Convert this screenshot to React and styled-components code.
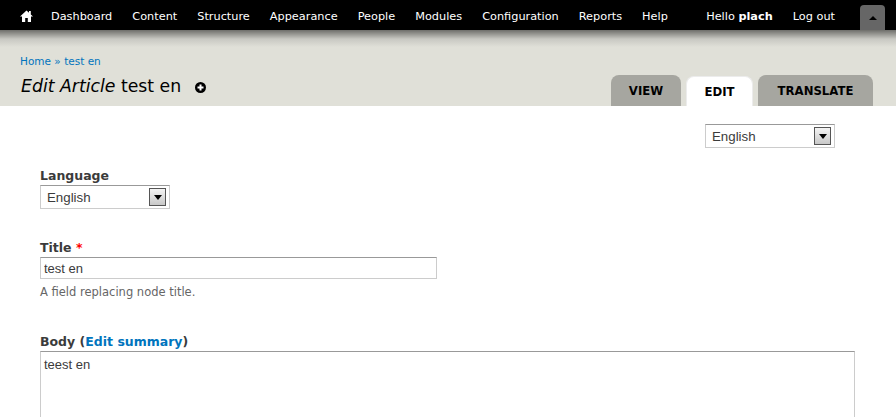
import React from 'react';
import styled, { createGlobalStyle } from 'styled-components';

const GlobalStyle = createGlobalStyle`
  html, body {
    margin: 0;
    padding: 0;
    height: 417px;
    overflow: hidden;
    background: #ffffff;
    font-family: "DejaVu Sans", Verdana, sans-serif;
  }
`;

const menuItems = ['Dashboard', 'Content', 'Structure', 'Appearance', 'People', 'Modules', 'Configuration', 'Reports', 'Help'];

function Select() {
  return (
    <SelectBox>
      <span>English</span>
      <SelectArrow>
        <svg width="8" height="5" viewBox="0 0 8 5">
          <path d="M0 0h8L4 5z" fill="#000" />
        </svg>
      </SelectArrow>
    </SelectBox>
  );
}

export default function App() {
  return (
    <Page>
      <GlobalStyle />
      <Toolbar>
        <HomeLink>
          <svg width="13" height="12" viewBox="0 0 13 12">
            <path d="M6.5 0.5L0 6.5h2V12h3.2V8h2.6v4H11V6.5h2L10.8 4.4V1H9v1.7z" fill="#fff" />
          </svg>
        </HomeLink>
        <Menu>
          {menuItems.map((item) => (
            <MenuLink key={item}>{item}</MenuLink>
          ))}
        </Menu>
        <UserMenu>
          <UserName>
            Hello <strong>plach</strong>
          </UserName>
          <MenuLink>Log out</MenuLink>
        </UserMenu>
        <ToggleButton>
          <svg width="8" height="4" viewBox="0 0 8 4">
            <path d="M0 4h8L4 0z" fill="#000" />
          </svg>
        </ToggleButton>
      </Toolbar>
      <Header>
        <HeaderLeft>
          <Breadcrumb>
            <LinkText>Home</LinkText> » <LinkText>test en</LinkText>
          </Breadcrumb>
          <PageTitle>
            <span>
              <em>Edit Article</em> test en
            </span>
            <AddIcon>
              <svg width="11" height="11" viewBox="0 0 11 11">
                <circle cx="5.5" cy="5.5" r="5.5" fill="#000" />
                <path d="M4.5 2.5h2v2h2v2h-2v2h-2v-2h-2v-2h2z" fill="#fff" />
              </svg>
            </AddIcon>
          </PageTitle>
        </HeaderLeft>
        <Tabs>
          <Tab $width={70}>VIEW</Tab>
          <Tab $width={67} $active>EDIT</Tab>
          <Tab $width={115}>TRANSLATE</Tab>
        </Tabs>
      </Header>
      <Content>
        <TopSwitcher>
          <Select />
        </TopSwitcher>
        <LanguageField>
          <Label>Language</Label>
          <Select />
        </LanguageField>
        <TitleField>
          <Label>
            Title <Required>*</Required>
          </Label>
          <TextInput defaultValue="test en" />
          <Description>A field replacing node title.</Description>
        </TitleField>
        <BodyField>
          <Label>
            Body (<BoldLink>Edit summary</BoldLink>)
          </Label>
          <BodyArea defaultValue="teest en" />
        </BodyField>
      </Content>
    </Page>
  );
}

const Page = styled.div`
  width: 896px;
  height: 417px;
  overflow: hidden;
`;

const Toolbar = styled.div`
  display: flex;
  align-items: flex-start;
  height: 30px;
  background: #000000;
  color: #ffffff;
  font-size: 11.3px;
`;

const HomeLink = styled.a`
  display: flex;
  margin: 10px 0 0 20px;
  width: 13px;
`;

const Menu = styled.nav`
  display: flex;
  gap: 20px;
  margin: 10px 0 0 18px;
  line-height: 13px;
`;

const MenuLink = styled.a`
  color: #ffffff;
  white-space: nowrap;
`;

const UserMenu = styled.div`
  display: flex;
  gap: 20px;
  margin: 10px 0 0 auto;
  line-height: 13px;
`;

const UserName = styled.span`
  white-space: nowrap;
  strong {
    font-weight: 700;
  }
`;

const ToggleButton = styled.button`
  display: flex;
  align-items: center;
  justify-content: center;
  width: 25px;
  height: 25px;
  margin: 5px 11px 0 25px;
  padding: 0;
  border: 0;
  border-radius: 4px 4px 0 0;
  background: #666666;
`;

const Header = styled.header`
  display: flex;
  justify-content: space-between;
  align-items: flex-end;
  height: 76px;
  padding: 0 23px 0 20px;
  background: linear-gradient(#6e6e6a 0, #c8c8c2 9px, #e0e0d8 17px, #e0e0d8 100%);
`;

const HeaderLeft = styled.div`
  display: flex;
  flex-direction: column;
  align-self: flex-start;
  padding-top: 25px;
`;

const Breadcrumb = styled.div`
  font-size: 10.5px;
  line-height: 13px;
  color: #0074bd;
`;

const LinkText = styled.a`
  color: #0074bd;
`;

const PageTitle = styled.h1`
  display: flex;
  align-items: center;
  margin: 7px 0 0 1px;
  font-size: 17.3px;
  line-height: 23px;
  font-weight: 400;
  color: #000000;
  em {
    font-style: italic;
  }
`;

const AddIcon = styled.span`
  display: flex;
  margin: 1px 0 0 14px;
`;

const Tabs = styled.div`
  display: flex;
  align-items: flex-end;
  gap: 5px;
`;

const Tab = styled.a`
  display: flex;
  align-items: center;
  justify-content: center;
  box-sizing: border-box;
  width: ${(p) => p.$width}px;
  height: ${(p) => (p.$active ? '30px' : '31px')};
  border-radius: 8px 8px 0 0;
  background: ${(p) => (p.$active ? '#ffffff' : '#a6a6a0')};
  color: #000000;
  font-size: 11.7px;
  font-weight: 700;
  ${(p) => p.$active && 'border: 1px solid #ececec; border-bottom: 0;'}
`;

const Content = styled.main`
  display: flex;
  flex-direction: column;
  padding: 18px 41px 0 40px;
  background: #ffffff;
`;

const TopSwitcher = styled.div`
  display: flex;
  justify-content: flex-end;
  padding-right: 20px;
`;

const SelectBox = styled.div`
  display: flex;
  align-items: center;
  justify-content: space-between;
  box-sizing: border-box;
  width: 130px;
  height: 24px;
  padding: 0 3px 0 6px;
  border: 1px solid #cccccc;
  border-top-color: #999999;
  font-family: "Liberation Sans", Arial, sans-serif;
  font-size: 13.3px;
  color: #3b3b3b;
`;

const SelectArrow = styled.span`
  display: flex;
  align-items: center;
  justify-content: center;
  box-sizing: border-box;
  width: 17px;
  height: 18px;
  border: 1px solid #555555;
  background: linear-gradient(#f4f4f4, #c8c8c8);
`;

const LanguageField = styled.div`
  margin-top: 20px;
`;

const Label = styled.label`
  display: block;
  margin-bottom: 1px;
  font-size: 12.5px;
  line-height: 16px;
  font-weight: 700;
  color: #3b3b3b;
`;

const Required = styled.span`
  color: #ff0000;
`;

const TitleField = styled.div`
  margin-top: 31px;
`;

const TextInput = styled.input`
  display: block;
  box-sizing: border-box;
  width: 397px;
  height: 22px;
  margin: 0;
  padding: 0 3px;
  border: 1px solid #cccccc;
  border-top-color: #999999;
  outline: 0;
  font-family: "Liberation Sans", Arial, sans-serif;
  font-size: 13px;
  color: #3b3b3b;
`;

const Description = styled.div`
  margin-top: 6px;
  font-size: 11.5px;
  line-height: 14px;
  color: #666666;
`;

const BodyField = styled.div`
  margin-top: 35px;
`;

const BoldLink = styled.a`
  color: #0074bd;
`;

const BodyArea = styled.textarea`
  display: block;
  box-sizing: border-box;
  width: 815px;
  height: 200px;
  margin: 0;
  padding: 5px 3px;
  border: 1px solid #cccccc;
  border-top-color: #999999;
  outline: 0;
  resize: none;
  font-family: "Liberation Sans", Arial, sans-serif;
  font-size: 13px;
  line-height: 16px;
  color: #3b3b3b;
`;
